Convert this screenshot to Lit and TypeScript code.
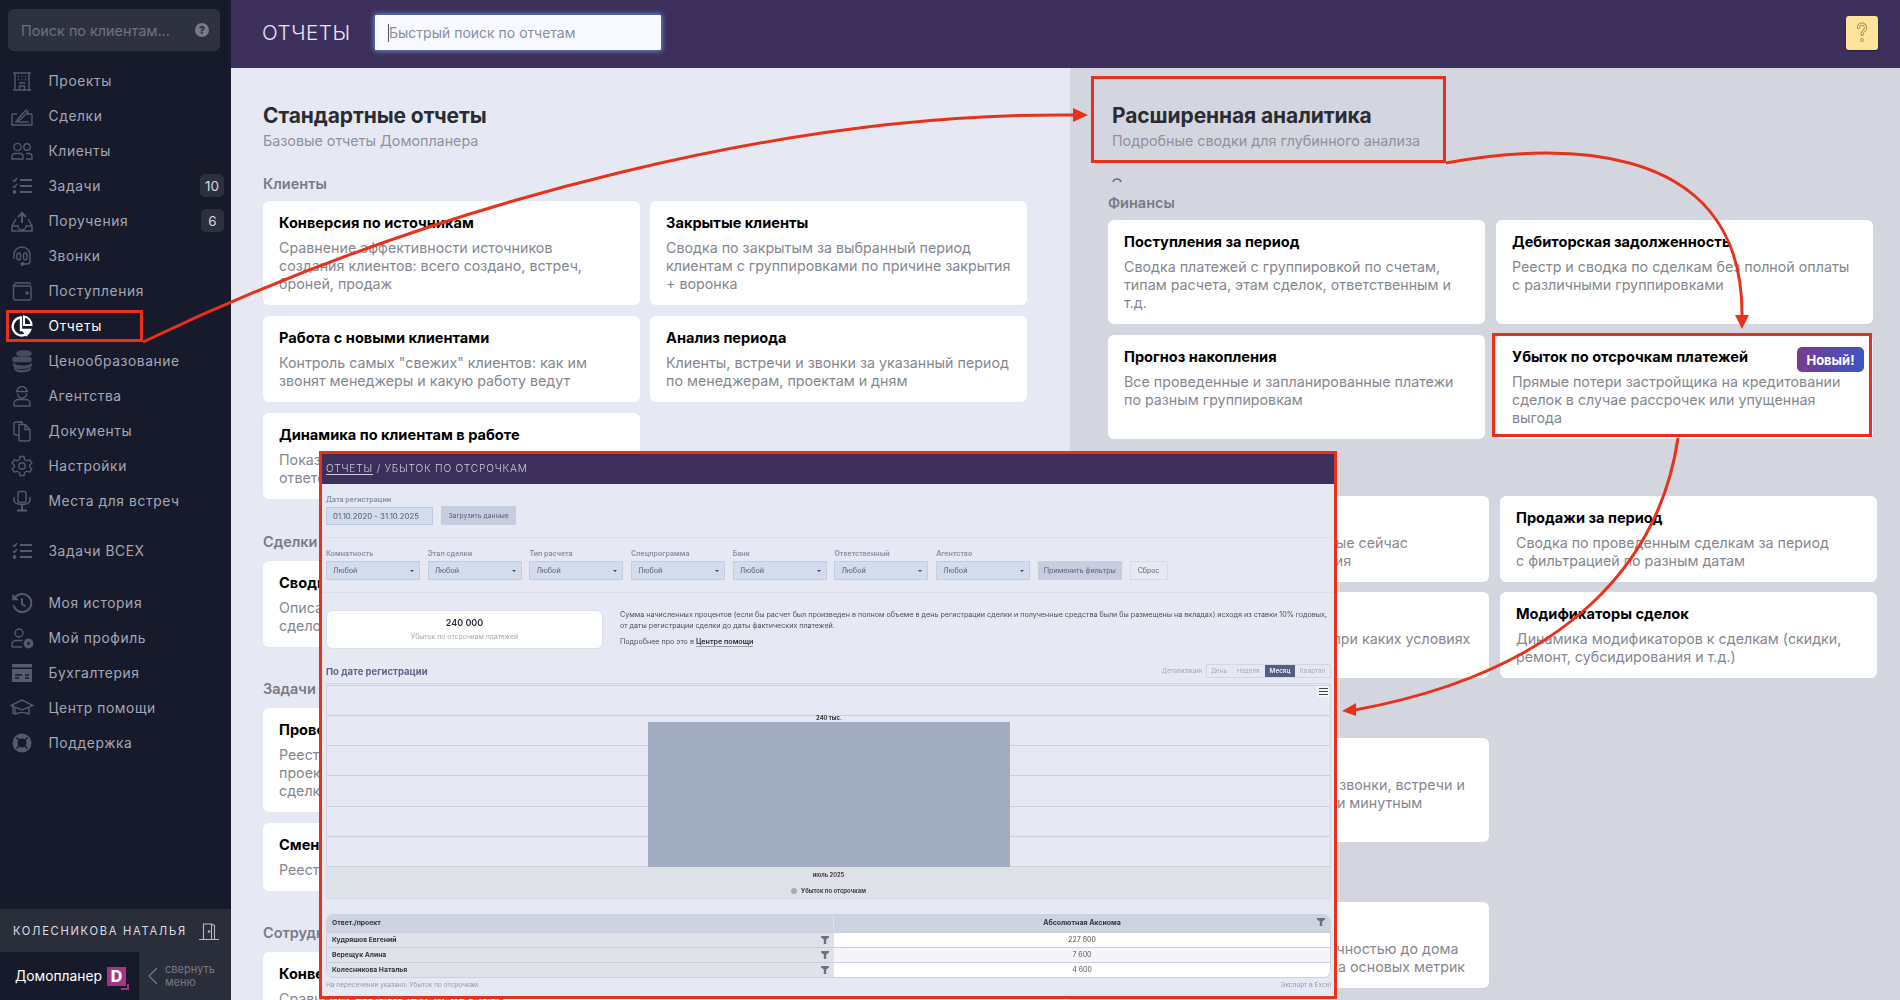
import { LitElement, html, css, svg } from "lit";
import { customElement } from "lit/decorators.js";

const FONT = css`Inter, "Noto Sans", "Liberation Sans", sans-serif`;

const icons: Record<string, unknown> = {
  building: svg`<path d="M3 4h18M3 21h18M5 4v17M19 4v17M9.5 21v-4h5v4"/><path d="M8 7.5h1M11.5 7.5h1M15 7.5h1M8 10.5h1M11.5 10.5h1M15 10.5h1M9 14h6"/>`,
  deal: svg`<path d="M2 10h5M17 10h5M22 10v11H2V10"/><path d="M8 15l8-9 2 2-8 8-3 1z"/><path d="M5 18h14"/>`,
  people: svg`<circle cx="7.5" cy="8" r="3.6"/><circle cx="17" cy="8" r="3.2"/><path d="M2 20v-2.500a3 3 0 0 1 3-3h5a3 3 0 0 1 3 3V20zM16 14.500h3.500a3 3 0 0 1 2.500 3V20h-6"/>`,
  tasks: svg`<path d="M10 6h12M10 12h12M10 18h12" stroke-width="2"/><path d="M3 6l1.500 1.500L7 4M3 12l1.500 1.500L7 10"/><circle cx="4.500" cy="18" r="1.200" fill="currentColor"/>`,
  inbox: svg`<path d="M12 14V4M8 8l4-4 4 4" stroke-width="2"/><path d="M6 10l-4 7v5h20v-5l-4-7M2 17h6a4 4 0 0 0 8 0h6"/>`,
  headset: svg`<path d="M4 15V11a8 8 0 0 1 16 0v6a3 3 0 0 1-3 3h-3"/><rect x="7" y="9" width="3.500" height="7" rx="1.700"/><rect x="13.500" y="9" width="3.500" height="7" rx="1.700"/><circle cx="12.500" cy="20" r="1.300" fill="currentColor"/>`,
  wallet: svg`<path d="M5 4h14a1.500 1.500 0 0 1 1.500 1.500M3.500 7a2 2 0 0 1 2-2M3.500 7v12a2 2 0 0 0 2 2h14a1.500 1.500 0 0 0 1.500-1.500v-11A1.500 1.500 0 0 0 19.500 7z"/><circle cx="17" cy="14" r="1" fill="currentColor"/>`,
  pie: svg`<path d="M10.500 3.500a9 9 0 1 0 9.500 12.500H11V3.500z" stroke-width="2.400"/><path d="M14 2.500a8.500 8.500 0 0 1 7.500 8.500H14z" stroke-width="2"/><path d="M13 17l7 0-3.500 4.500z" fill="currentColor"/>`,
  coins: svg`<g opacity=".8"><ellipse cx="14" cy="4.500" rx="7" ry="2.500" fill="currentColor"/><path d="M5 8.500h14a2 2 0 0 1 0 4H5a2 2 0 0 1 0-4z" fill="currentColor"/><path d="M4 15c2 3 14 3 17 0v2c-3 3-15 3-17 0zM5 19.500c2 3 12 3 15 0v1c-3 3-13 3-15 0z" fill="currentColor"/></g>`,
  agent: svg`<path d="M7 7.500a5 5 0 0 1 10 0zM6 7.500h12"/><path d="M7.500 9.500a4.500 4.500 0 0 0 9 0"/><path d="M4 22v-2.500a4 4 0 0 1 4-4h8a4 4 0 0 1 4 4V22z"/>`,
  docs: svg`<path d="M9 16H6a2 2 0 0 1-2-2V5a2 2 0 0 1 2-2h6"/><path d="M9 5.500h6l5 5V20a2 2 0 0 1-2 2H11a2 2 0 0 1-2-2z"/><path d="M15 5.500v5h5"/><path d="M9 3h3v2.500"/>`,
  gear: svg`<circle cx="12" cy="12" r="3.200"/><path d="M10 2.500h4l.6 3 2.400 1.300 2.800-1 2 3.400-2.200 2v1.600l2.200 2-2 3.400-2.800-1-2.400 1.300-.6 3h-4l-.6-3L7 17.200l-2.800 1-2-3.400 2.200-2v-1.600l-2.200-2 2-3.400 2.800 1 2.400-1.300z"/>`,
  chair: svg`<rect x="8" y="2.500" width="8" height="11" rx="2"/><path d="M4 8v4M20 8v4M4 10.500c0 4 3 5 8 5s8-1 8-5"/><path d="M12 15.500v5M7 21.500h10" stroke-width="2"/>`,
  history: svg`<path d="M4.500 7.500A9 9 0 1 1 3.500 14" stroke-width="2"/><path d="M3 3.500v5h5" fill="currentColor"/><path d="M12 7.500V13l3.500 2.500" stroke-width="2"/>`,
  profile: svg`<circle cx="9" cy="7" r="4"/><path d="M2 21v-2.500a4 4 0 0 1 4-4h6.500M2 21h10"/><circle cx="18.500" cy="17.500" r="4.200" fill="currentColor"/><circle cx="18.500" cy="17.500" r="1.400" fill="#171a2b" stroke="none"/>`,
  card: svg`<path d="M2 3h20v3.500H2zM2 8h20v13H2z" fill="currentColor" stroke="none"/><path d="M5 14h7M5 17h4M15 14h4M15 17h4" stroke="#171a2b"/>`,
  cap: svg`<path d="M12 4L1 9.500 12 14l11-4.500z"/><path d="M5 12v6c4-2 10-2 14 0v-6M3 10.500V18"/>`,
  buoy: svg`<circle cx="12" cy="12" r="7" stroke-width="5"/><path d="M6.500 6.500l3 3M17.500 6.500l-3 3M6.500 17.500l3-3M17.500 17.500l-3-3" stroke="#171a2b" stroke-width="1.500"/>`,
};

interface NavItem { icon: string; label: string; badge?: string; active?: boolean; gap?: string; }

const nav: NavItem[] = [
  { icon: "building", label: "Проекты" },
  { icon: "deal", label: "Сделки" },
  { icon: "people", label: "Клиенты" },
  { icon: "tasks", label: "Задачи", badge: "10" },
  { icon: "inbox", label: "Поручения", badge: "6" },
  { icon: "headset", label: "Звонки" },
  { icon: "wallet", label: "Поступления" },
  { icon: "pie", label: "Отчеты", active: true },
  { icon: "coins", label: "Ценообразование" },
  { icon: "agent", label: "Агентства" },
  { icon: "docs", label: "Документы" },
  { icon: "gear", label: "Настройки" },
  { icon: "chair", label: "Места для встреч" },
  { icon: "tasks", label: "Задачи ВСЕХ", gap: "g1" },
  { icon: "history", label: "Моя история", gap: "g2" },
  { icon: "profile", label: "Мой профиль" },
  { icon: "card", label: "Бухгалтерия" },
  { icon: "cap", label: "Центр помощи" },
  { icon: "buoy", label: "Поддержка" },
];

interface Card { t: string; d: string; badge?: string; }
interface Group { label: string; cards: Card[]; }

const stdGroups: Group[] = [
  { label: "Клиенты", cards: [
    { t: "Конверсия по источникам", d: "Сравнение эффективности источников\nсоздания клиентов: всего создано, встреч,\nброней, продаж" },
    { t: "Закрытые клиенты", d: "Сводка по закрытым за выбранный период\nклиентам с группировками по причине закрытия\n+ воронка" },
    { t: "Работа с новыми клиентами", d: "Контроль самых \"свежих\" клиентов: как им\nзвонят менеджеры и какую работу ведут" },
    { t: "Анализ периода", d: "Клиенты, встречи и звонки за указанный период\nпо менеджерам, проектам и дням" },
    { t: "Динамика по клиентам в работе", d: "Показывает, сколько клиентов в работе у\nответственных менеджеров" },
  ]},
  { label: "Сделки", cards: [
    { t: "Сводка по сделкам", d: "Описание проведенных и активных\nсделок по менеджерам" },
  ]},
  { label: "Задачи", cards: [
    { t: "Проверка задач", d: "Реестр задач по менеджерам,\nпроектам, клиентам и\nсделкам" },
    { t: "Просроченные задачи", d: "Сводка просроченных задач\nпо менеджерам\nи проектам" },
    { t: "Смены менеджеров", d: "Реестр смен менеджеров" },
  ]},
  { label: "Сотрудники", cards: [
    { t: "Конверсия сотрудников", d: "Сравнение работы менеджеров\nпо этапам" },
  ]},
];

const finance: Card[] = [
  { t: "Поступления за период", d: "Сводка платежей с группировкой по счетам,\nтипам расчета, этам сделок, ответственным и\nт.д." },
  { t: "Дебиторская задолженность", d: "Реестр и сводка по сделкам без полной оплаты\nс различными группировками" },
  { t: "Прогноз накопления", d: "Все проведенные и запланированные платежи\nпо разным группировкам" },
  { t: "Убыток по отсрочкам платежей", d: "Прямые потери застройщика на кредитовании\nсделок в случае рассрочек или упущенная\nвыгода", badge: "Новый!" },
];

const advGroups: Group[] = [
  { label: "Продажи", cards: [
    { t: "Остатки на складе", d: "Квартиры, доступные и занятые сейчас\nс возможностью бронирования" },
    { t: "Продажи за период", d: "Сводка по проведенным сделкам за период\nс фильтрацией по разным датам" },
    { t: "Анализ скидок", d: "Какие из сделок оплачены и при каких условиях\nи за какой срок" },
    { t: "Модификаторы сделок", d: "Динамика модификаторов к сделкам (скидки,\nремонт, субсидирования и т.д.)" },
  ]},
  { label: "Активность", cards: [
    { t: "Активность менеджеров", d: "Все активности менеджеров: звонки, встречи и\nих задачи с точностью до пяти минутным\nинтервалам" },
  ]},
  { label: "Продажи по домам", cards: [
    { t: "Шахматка продаж", d: "Ход продаж по проектам с точностью до дома\nс графиком и общая аналитика основых метрик" },
  ]},
];

const filters = ["Комнатность", "Этап сделки", "Тип расчета", "Спецпрограмма", "Банк", "Ответственный", "Агентство"];
const rows = [
  { n: "Кудряшов Евгений", v: "227 800" },
  { n: "Верещук Алина", v: "7 600" },
  { n: "Колесникова Наталья", v: "4 600" },
];

const funnel = html`<svg class="funnel" viewBox="0 0 10 10"><path d="M0 0h10v2L6.500 4.500V10h-3V4.500L0 2z"/></svg>`;

@customElement("report-preview")
class ReportPreview extends LitElement {
  static styles = css`
    :host { display: flex; flex-direction: column; height: 100%; background: #e6e9f4; font-family: ${FONT}; color: #4a4e60; overflow: hidden; }
    * { box-sizing: border-box; }
    .bar { height: 30px; flex: none; background: #3d2f5c; color: #cfcbdc; font-size: 10.200px; letter-spacing: .8px; display: flex; align-items: center; padding: 0 4px 2px; font-weight: 300; white-space: pre; }
    .bar u { text-underline-offset: 2px; }
    .sec { padding: 11px 3px 12px 4px; border-bottom: 1px solid #dbdfeb; display: flex; gap: 8px; align-items: flex-end; }
    .sec.f { padding-top: 11px; gap: 7.700px; }
    label { display: block; font-size: 7px; font-weight: 700; color: #8d93ac; line-height: 9px; margin-bottom: 3px; white-space: nowrap; }
    .inp { width: 107px; height: 18px; background: #d3dbef; border: 1px solid #c0c8de; font-size: 7.800px; display: flex; align-items: center; padding-left: 6px; color: #555a70; }
    .btn { height: 19px; background: #c6cde0; font-size: 6.800px; display: flex; align-items: center; justify-content: center; color: #5b607a; border-radius: 1px; white-space: nowrap; }
    .btn.load { width: 75px; }
    .btn.apply { width: 84px; font-size: 7.200px; }
    .btn.reset { width: 38px; background: #e6e9f4; border: 1px solid #d6dae6; font-size: 7px; }
    .selwrap { width: 94px; flex: none; }
    .sel { height: 19px; background: #d3dbef; border: 1px solid #c4cce0; display: flex; align-items: center; justify-content: space-between; padding: 0 5px 0 6px; font-size: 7.200px; color: #555a70; }
    .sel i { width: 0; height: 0; border: 2.200px solid transparent; border-top: 2.500px solid #444; border-bottom: 0; }
    .info { display: flex; padding: 17px 3px 0 4px; height: 66px; flex: none; }
    .stat { width: 277px; height: 39px; background: #fff; border: 1px solid #dcdfe8; border-radius: 6px; text-align: center; flex: none; padding-top: 6px; }
    .stat b { display: block; font-size: 9px; line-height: 12px; color: #2c2e38; font-weight: 600; }
    .stat span { display: block; font-size: 6.900px; line-height: 11px; color: #a3a6b3; margin-top: 2px; }
    .desc { margin-left: 17px; font-size: 7.150px; line-height: 10.500px; color: #4a4e60; white-space: pre; padding-top: 0; }
    .desc p { margin: 0 0 6px; }
    .desc b { font-weight: 600; color: #2c2e38; border-bottom: 1px solid #9a9eb0; }
    .hd { display: flex; align-items: center; justify-content: space-between; padding: 0 3px 0 4px; height: 14px; flex: none; margin-top: 5px; }
    .hd h3 { margin: 0; font-size: 9.500px; font-weight: 700; color: #5d6488; }
    .det { display: flex; align-items: center; font-size: 6.300px; color: #a5a9b8; }
    .det > span { margin-right: 4px; }
    .seg { display: flex; height: 14px; width: 125px; border: 1px solid #d3d7e3; border-radius: 1px; align-items: center; }
    .seg em { font-style: normal; text-align: center; line-height: 13px; height: 100%; }
    .seg em:nth-child(1) { width: 24px; } .seg em:nth-child(2) { width: 34px; }
    .seg em:nth-child(3) { width: 30px; background: #545e7e; color: #eef; font-weight: 600; }
    .seg em:nth-child(4) { flex: 1; }
    .chart { margin: 5px 3px 0 4px; height: 216px; flex: none; border: 1px solid #d3d7e3; border-radius: 2px; display: flex; flex-direction: column; background: #dfe1e8; }
    .plot { position: relative; height: 183px; flex: none; background-color: #e6e9f4; background-image: repeating-linear-gradient(to top, #ccd0dc 0 1px, transparent 1px 30.200px); }
    .b { position: absolute; left: 321px; width: 362px; bottom: 0; height: 145px; background: #a2acc0; }
    .lbl { position: absolute; left: 321px; width: 362px; bottom: 146px; text-align: center; font-size: 5.800px; font-weight: 700; color: #333; }
    .menu { position: absolute; right: 1px; top: 2px; width: 12px; height: 11px; background: #f3f4f8; display: flex; flex-direction: column; justify-content: center; gap: 1.500px; padding: 0 1.500px; }
    .menu i { height: 1.200px; background: #444; display: block; }
    .cap { text-align: center; font-size: 5.800px; color: #333; font-weight: 600; line-height: 8px; margin-top: 4px; padding-right: 0; }
    .leg { display: flex; justify-content: center; align-items: center; gap: 4px; font-size: 5.900px; font-weight: 700; color: #444; margin-top: 8px; line-height: 8px; }
    .leg i { width: 6px; height: 6px; border-radius: 50%; background: #a2acc0; }
    .tbl { margin: 15px 3px 0 4px; border: 1px solid #cdd1de; border-radius: 7px; overflow: hidden; flex: none; }
    .tr { display: grid; grid-template-columns: 507px 1fr; height: 15px; border-top: 1px solid #cbcfdb; font-size: 6.800px; line-height: 14px; }
    .tr:first-child { height: 17px; border-top: 0; line-height: 16px; background: #cdd2e0; }
    .tr > div { position: relative; }
    .n { background: #dfe2e9; font-weight: 700; color: #33353f; padding-left: 5px; }
    .v { background: #fff; text-align: center; color: #555; font-size: 7px; }
    .tr:nth-child(3) .v { background: #f4f5f8; }
    .tr:first-child .n, .tr:first-child .v { background: transparent; font-weight: 700; color: #33353f; }
    .tr:first-child .n { border-right: 1px solid #dfe2e9; }
    .funnel { position: absolute; right: 5px; top: 3px; width: 8px; height: 8px; fill: #6d7283; }
    .foot { display: flex; justify-content: space-between; padding: 3px 3px 0 4px; font-size: 6.500px; color: #9599a8; }
  `;
  render() {
    return html`
      <div class="bar"><u>ОТЧЕТЫ</u> / УБЫТОК ПО ОТСРОЧКАМ</div>
      <div class="sec">
        <div><label>Дата регистрации</label><div class="inp">01.10.2020 - 31.10.2025</div></div>
        <div class="btn load">Загрузить данные</div>
      </div>
      <div class="sec f">
        ${filters.map((f) => html`<div class="selwrap"><label>${f}</label><div class="sel">Любой<i></i></div></div>`)}
        <div class="btn apply">Применить фильтры</div>
        <div class="btn reset">Сброс</div>
      </div>
      <div class="info">
        <div class="stat"><b>240 000</b><span>Убыток по отсрочкам платежей</span></div>
        <div class="desc"><p>Сумма начисленных процентов (если бы расчет был произведен в полном объеме в день регистрации сделки и полученные средства были бы размещены на вкладах) исходя из ставки 10% годовых,
от даты регистрации сделки до даты фактических платежей.</p><p>Подробнее про это в <b>Центре помощи</b></p></div>
      </div>
      <div class="hd"><h3>По дате регистрации</h3>
        <div class="det"><span>Детализация</span><div class="seg"><em>День</em><em>Неделя</em><em>Месяц</em><em>Квартал</em></div></div>
      </div>
      <div class="chart">
        <div class="plot">
          <div class="lbl">240 тыс.</div><div class="b"></div>
          <div class="menu"><i></i><i></i><i></i></div>
        </div>
        <div class="cap">июль 2025</div>
        <div class="leg"><i></i>Убыток по отсрочкам</div>
      </div>
      <div class="tbl">
        <div class="tr"><div class="n">Ответ./проект</div><div class="v">Абсолютная Аксиома${funnel}</div></div>
        ${rows.map((r) => html`<div class="tr"><div class="n">${r.n}${funnel}</div><div class="v">${r.v}</div></div>`)}
      </div>
      <div class="foot"><span>На пересечении указано: Убыток по отсрочкам</span><span>Экспорт в Excel</span></div>
    `;
  }
}

@customElement("app-root")
class AppRoot extends LitElement {
  static styles = css`
    :host { display: block; position: relative; width: 1900px; height: 1000px; overflow: hidden; font-family: ${FONT}; background: #e6e9f4; }
    * { box-sizing: border-box; }
    .page { display: flex; height: 1000px; }
    .side { width: 231px; flex: none; background: #171a2b; display: flex; flex-direction: column; }
    .search { margin: 9px 11px 12px 8px; height: 42px; background: #2e3140; border-radius: 6px; display: flex; align-items: center; justify-content: space-between; padding: 0 11px 0 13px; color: #6f7282; font-size: 14.400px; flex: none; }
    .q { width: 14px; height: 14px; border-radius: 50%; background: #787a86; color: #2e3140; font-size: 11px; font-weight: 800; text-align: center; line-height: 14px; }
    .item { height: 35px; flex: none; display: flex; align-items: center; padding-left: 10px; color: #a5a7b7; font-size: 13.800px; letter-spacing: .6px; position: relative; }
    .item.g1 { margin-top: 15px; } .item.g2 { margin-top: 17px; }
    .item svg { width: 24px; height: 24px; margin-right: 14.500px; flex: none; fill: none; stroke: #565a6f; color: #565a6f; stroke-width: 1.400; }
    .item.active { color: #fff; }
    .item.active svg { stroke: #fff; color: #fff; }
    .badge { position: absolute; right: 7px; top: 6px; height: 23px; min-width: 23px; padding: 0 5px; background: #2d303e; border-radius: 5px; color: #d8d9e0; font-size: 13.500px; letter-spacing: 0; display: flex; align-items: center; justify-content: center; }
    .user { margin-top: auto; height: 43px; background: #2a2d3a; display: flex; align-items: center; justify-content: space-between; padding: 0 12px 0 13px; color: #dedfe6; font-size: 11.200px; letter-spacing: 1.700px; flex: none; white-space: nowrap; }
    .user svg { width: 20px; height: 20px; fill: none; stroke: #b9bbc6; stroke-width: 1.100; flex: none; }
    .brand { height: 48px; display: flex; flex: none; }
    .logo { width: 139px; display: flex; align-items: center; padding-left: 15px; color: #fff; font-size: 13.800px; gap: 5px; }
    .d { width: 19px; height: 19px; background: #a2357f; color: #fff; font-weight: 800; font-size: 16px; line-height: 19px; text-align: center; position: relative; }
    .d::after { content: ""; position: absolute; right: -3px; bottom: -4px; width: 6px; height: 4px; border-right: 2px solid #a2357f; border-bottom: 2px solid #a2357f; }
    .coll { flex: 1; background: #2a2d3a; display: flex; align-items: center; gap: 7px; padding-left: 8px; color: #777a8b; font-size: 11px; line-height: 13px; }
    .coll svg { width: 11px; height: 18px; fill: none; stroke: #777a8b; stroke-width: 1.200; flex: none; }
    .main { flex: 1; display: flex; flex-direction: column; min-width: 0; }
    .top { height: 68px; flex: none; background: #3d2f5c; display: flex; align-items: center; padding: 0 22px 3px 31px; }
    .top h1 { margin: 0; width: 113px; color: #e9e7ef; font-size: 20.700px; font-weight: 300; letter-spacing: .5px; }
    .qs { width: 286px; height: 35px; background: #f7f9ff; border-radius: 1px; box-shadow: 0 0 5px 1px #6f8fd8; display: flex; align-items: center; padding-left: 13px; color: #8a8f9f; font-size: 14px; }
    .qs::before { content: ""; width: 1px; height: 18px; background: #555; margin-right: 0; }
    .help { margin-left: auto; width: 32px; height: 34px; background: #fde49a; border-radius: 3px; box-shadow: 0 1px 2px #0005; display: flex; align-items: center; justify-content: center; }
    .help svg { width: 14px; height: 26px; fill: none; stroke-linecap: round; }
    .help .o { stroke: #a4884a; stroke-width: 3.200; }
    .help .i { stroke: #fde49a; stroke-width: 1.400; }
    .panels { flex: 1; display: flex; min-height: 0; }
    .std { width: 839px; flex: none; padding: 0 32px; overflow: hidden; }
    .adv { flex: 1; background: #d3d6df; padding: 0 0 0 42px; overflow: hidden; }
    h2 { margin: 35px 0 0; font-size: 21px; line-height: 26px; font-weight: 700; color: #2a2c33; letter-spacing: -.1px; }
    .sub { font-size: 14.300px; line-height: 18px; color: #8f919d; margin-top: 3px; }
    .glabel { font-size: 14.500px; font-weight: 600; color: #787b87; line-height: 18px; margin: 0 0 10px; }
    .grid { display: grid; grid-template-columns: 377px 377px; gap: 10px; align-items: stretch; }
    .std .grid { margin-bottom: 33px; row-gap: 11px; }
    .std .glabel.first { margin: 25px 0 8px; }
    .std .glabel.first + .grid { margin-bottom: 34px; }
    .card { background: #fff; border-radius: 6px; padding: 12px 16px; position: relative; }
    .card h4 { margin: 0 0 6px; font-size: 14.600px; line-height: 20px; font-weight: 700; color: #000; white-space: nowrap; }
    .card p { margin: 0; font-size: 14.250px; line-height: 18px; color: #85878f; white-space: pre; }
    .tag { position: absolute; right: 9px; top: 12px; height: 25px; width: 67px; border-radius: 5px; background: linear-gradient(100deg, #7b3a8e, #3a56c9); color: #fff; font-size: 13px; font-weight: 700; display: flex; align-items: center; justify-content: center; }
    .fin { margin: 44px 0 0 -4px; }
    .fin .grid { gap: 11px; }
    .fin .glabel { margin-bottom: 8px; }
    .rest { margin-top: 57px; }
    .rest .grid { gap: 10px 11px; margin-bottom: 60px; }
    .frame { position: absolute; border: 3px solid #e8311a; pointer-events: none; }
    .frame.nav { left: 6px; top: 310px; width: 137px; height: 32px; }
    .frame.head { left: 1091px; top: 76px; width: 355px; height: 87px; }
    .frame.cardbox { left: 1492px; top: 333px; width: 380px; height: 104px; }
    .frame.shot { left: 319px; top: 451px; width: 1018px; height: 548px; background: #e6e9f4; filter: blur(.3px); }
    .arrows { position: absolute; left: 0; top: 0; width: 1900px; height: 1000px; pointer-events: none; fill: none; stroke: #e8311a; stroke-width: 3; }
    .arrows polygon { fill: #e8311a; stroke: none; }
    .arrows .mark { stroke: #6b6e7a; stroke-width: 1.500; }
  `;

  private cardT(c: Card) {
    return html`<div class="card"><h4>${c.t}</h4><p>${c.d}</p>${c.badge ? html`<div class="tag">${c.badge}</div>` : ""}</div>`;
  }

  render() {
    const q = "M3.500 7.500a3.500 3.500 0 1 1 6 2.500C8 11.500 7 12.500 7 14.500";
    return html`
      <div class="page">
        <aside class="side">
          <div class="search"><span>Поиск по клиентам...</span><div class="q">?</div></div>
          ${nav.map((n) => html`
            <div class="item ${n.active ? "active" : ""} ${n.gap ?? ""}">
              <svg viewBox="0 0 24 24">${icons[n.icon]}</svg><span>${n.label}</span>
              ${n.badge ? html`<div class="badge">${n.badge}</div>` : ""}
            </div>`)}
          <div class="user"><span>КОЛЕСНИКОВА НАТАЛЬЯ</span>
            <svg viewBox="0 0 20 20"><path d="M0 18.500h20M4.500 18.500V3h8l3 1.500v14M12.500 3v15.500"/><circle cx="10" cy="10.500" r=".8"/></svg>
          </div>
          <div class="brand">
            <div class="logo">Домопланер<div class="d">D</div></div>
            <div class="coll"><svg viewBox="0 0 11 18"><path d="M10 1L2 9l8 8"/></svg><span>свернуть<br />меню</span></div>
          </div>
        </aside>
        <div class="main">
          <header class="top">
            <h1>ОТЧЕТЫ</h1>
            <div class="qs">Быстрый поиск по отчетам</div>
            <div class="help"><svg viewBox="0 0 14 26">
              <path class="o" d="${q}"/><path class="o" d="M7 19.500v1"/>
              <path class="i" d="${q}"/><path class="i" d="M7 19.500v1"/>
            </svg></div>
          </header>
          <div class="panels">
            <section class="std">
              <h2>Стандартные отчеты</h2>
              <div class="sub">Базовые отчеты Домопланера</div>
              ${stdGroups.map((g, i) => html`
                <div class="glabel ${i === 0 ? "first" : ""}">${g.label}</div>
                <div class="grid">${g.cards.map((c) => this.cardT(c))}</div>`)}
            </section>
            <section class="adv">
              <h2>Расширенная аналитика</h2>
              <div class="sub">Подробные сводки для глубинного анализа</div>
              <div class="fin">
                <div class="glabel">Финансы</div>
                <div class="grid">${finance.map((c) => this.cardT(c))}</div>
              </div>
              <div class="rest">
                ${advGroups.map((g) => html`<div class="grid">${g.cards.map((c) => this.cardT(c))}</div>`)}
              </div>
            </section>
          </div>
        </div>
      </div>

      <svg class="arrows" viewBox="0 0 1900 1000">
        <path class="mark" d="M1113 182c1-4 7-4 8 0"/>
        <path d="M143 342C450 195 800 112 1075 115"/>
        <polygon points="1088,115 1073,108 1073,122"/>
        <path d="M1446 163C1540 145 1745 130 1742 318"/>
        <polygon points="1742,329 1735,315 1749,315"/>
        <path d="M1678 438C1660 560 1570 670 1355 710"/>
        <polygon points="1342,711 1356,703 1356,716"/>
      </svg>
      <div class="frame nav"></div>
      <div class="frame head"></div>
      <div class="frame cardbox"></div>
      <div class="frame shot"><report-preview></report-preview></div>
    `;
  }
}
